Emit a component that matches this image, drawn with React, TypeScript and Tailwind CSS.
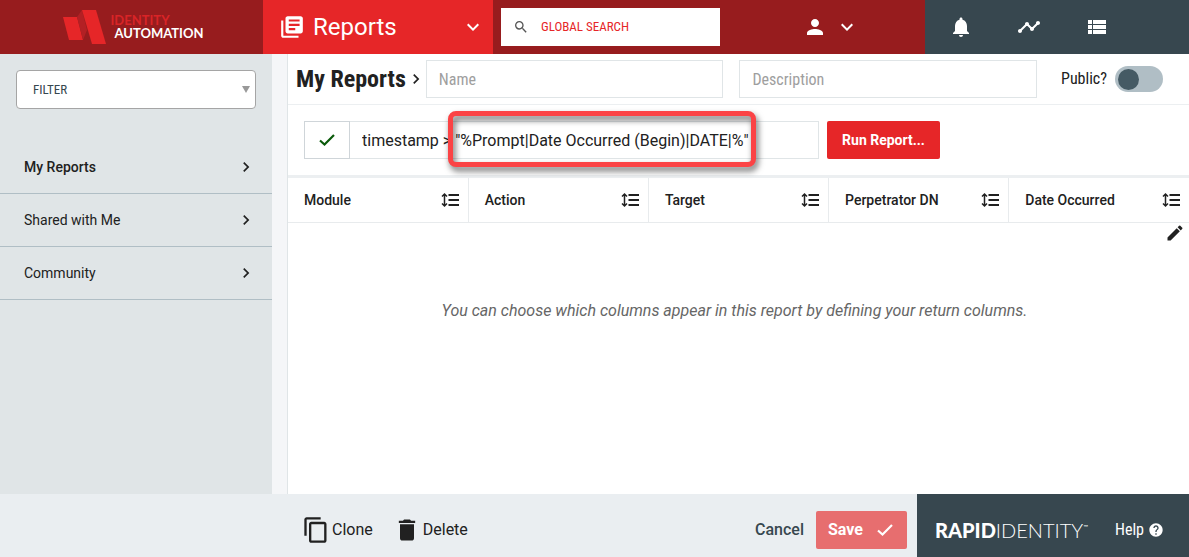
import { useState } from 'react'
import {
  MdContentCopy, MdDelete, MdEdit, MdHelp, MdKeyboardArrowDown, MdKeyboardArrowRight,
  MdLibraryBooks, MdNotifications, MdPerson, MdSearch, MdTimeline, MdViewList,
} from 'react-icons/md'

const sections = ['My Reports', 'Shared with Me', 'Community']
const columns = ['Module', 'Action', 'Target', 'Perpetrator DN', 'Date Occurred']

function Logo() {
  return (
    <a href="#" aria-label="Identity Automation" className="flex items-center gap-1">
      <svg viewBox="0 0 43 34" className="h-[34px] w-[43px]">
        <path d="M0 7h14l6 23H6z" fill="#e62628" />
        <path d="M14 7l5-7 5 20-4 10z" fill="#b32024" />
        <path d="M19 0h14l10 34H29z" fill="#e62628" />
      </svg>
      <span className="flex flex-col font-['Lato'] text-[13px] leading-[13px] font-bold">
        <span className="text-[#d92427]">IDENTITY</span>
        <span className="pl-1 text-white">AUTOMATION</span>
      </span>
    </a>
  )
}

function Check() {
  return (
    <svg viewBox="0 0 20 20" className="size-5" fill="none" stroke="currentColor" strokeWidth="2.2">
      <path d="M3 10.5l4.5 4L17 5" />
    </svg>
  )
}

// up/down arrow next to three lines
function SortIcon() {
  return (
    <svg viewBox="0 0 20 16" className="h-4 w-5 shrink-0" fill="none" stroke="currentColor">
      <path d="M8.5 3H19M8.5 8H19M8.5 13H19" strokeWidth="2" />
      <path d="M4.5 2v12M2 4.5L4.5 2 7 4.5M2 11.5L4.5 14 7 11.5" strokeWidth="1.5" />
    </svg>
  )
}

function Header() {
  return (
    <header className="flex h-[54px] shrink-0 bg-[#971c1e] text-white">
      <div className="flex w-[263px] shrink-0 items-center justify-center pl-1"><Logo /></div>
      <button className="flex w-[230px] shrink-0 items-center bg-[#e62628] pr-2 pl-4">
        <MdLibraryBooks className="mr-2 size-[26px]" />
        <span className="text-2xl">Reports</span>
        <MdKeyboardArrowDown className="ml-auto size-6" />
      </button>
      <div className="flex flex-1 items-center pl-2">
        <label className="flex h-[38px] w-[219px] items-center gap-3 bg-white px-3">
          <MdSearch className="size-4 shrink-0 text-[#555]" />
          <input type="search" aria-label="Global search" placeholder="GLOBAL SEARCH" className="w-full min-w-0 font-['Roboto_Condensed','Roboto',sans-serif] text-[13px] text-gray-800 outline-none placeholder:text-[#e62628]" />
        </label>
        <button aria-label="Account" className="mr-[66px] ml-auto flex items-center gap-2">
          <MdPerson className="size-6" />
          <MdKeyboardArrowDown className="size-6" />
        </button>
      </div>
      <div className="flex w-[264px] shrink-0 items-center gap-11 bg-[#37474f] pl-6">
        <button aria-label="Notifications"><MdNotifications className="size-6" /></button>
        <button aria-label="Activity"><MdTimeline className="size-6" /></button>
        <button aria-label="Lists"><MdViewList className="size-6" /></button>
      </div>
    </header>
  )
}

function Sidebar() {
  return (
    <aside className="w-[272px] shrink-0 bg-[#e0e5e7] pt-4">
      <div className="relative mx-4">
        <select aria-label="Filter" className="h-[39px] w-full appearance-none rounded border border-[#a5a5a5] bg-white px-4 font-['Roboto_Condensed','Roboto',sans-serif] text-[13px] text-[#37474f]">
          <option>FILTER</option>
        </select>
        <svg viewBox="0 0 8 7" className="pointer-events-none absolute top-4 right-1.5 h-[7px] w-2"><path d="M0 0h8L4 7z" fill="#999" /></svg>
      </div>
      <nav className="mt-8">
        {sections.map((s, i) => (
          <a key={s} href="#" className={`flex h-[53px] items-center justify-between border-b border-[#b0bec5] pr-4 pl-6 text-sm ${i === 0 ? 'font-medium' : ''}`}>
            {s}
            <MdKeyboardArrowRight className="size-5" />
          </a>
        ))}
      </nav>
    </aside>
  )
}

export default function App() {
  const [isPublic, setIsPublic] = useState(false)

  return (
    <div className="flex min-h-screen flex-col bg-white font-['Roboto',sans-serif] text-[#212121]">
      <Header />
      <div className="flex flex-1">
        <Sidebar />
        <main className="ml-4 flex min-w-0 flex-1 flex-col shadow-[-1px_0_0_#e0e5e7,-16px_0_0_#f5f6f8]">
          <div className="flex h-[51px] items-center border-b border-[#eceff1] px-2 font-['Roboto_Condensed','Roboto',sans-serif]">
            <h1 className="text-2xl font-bold whitespace-nowrap">My Reports</h1>
            <MdKeyboardArrowRight className="size-5 shrink-0" />
            <div className="flex flex-1 gap-4">
              <input aria-label="Name" placeholder="Name" className="h-[38px] min-w-0 flex-1 border border-[#e0e5e7] px-3 text-base outline-none placeholder:text-[#9e9e9e]" />
              <input aria-label="Description" placeholder="Description" className="h-[38px] min-w-0 flex-1 border border-[#e0e5e7] px-3 text-base outline-none placeholder:text-[#9e9e9e]" />
            </div>
            <label className="mr-[18px] ml-6 flex items-center gap-2 text-base">
              Public?
              <input type="checkbox" checked={isPublic} onChange={e => setIsPublic(e.target.checked)} className="peer sr-only" />
              <span className="flex h-[26px] w-12 items-center rounded-full bg-[#b0bec5] px-[3px] peer-checked:justify-end"><span className="size-[21px] rounded-full bg-[#455a64]" /></span>
            </label>
          </div>

          <div className="flex h-[73px] items-center border-b-[3px] border-[#eceff1] px-4">
            <button aria-label="Validate" className="flex h-[38px] w-[46px] items-center justify-center border border-[#cfd5d9] text-[#0a5a0a]">
              <Check />
            </button>
            <div className="relative w-[469px]">
              <input aria-label="Expression" defaultValue={'timestamp > "%Prompt|Date Occurred (Begin)|DATE|%"'} className="h-[38px] w-full border border-l-0 border-[#e0e5e7] px-3 text-base outline-none" />
              <div className="pointer-events-none absolute -top-2.5 left-[98px] h-14 w-[308px] rounded-lg border-[5px] border-[#fb4345] drop-shadow-[2px_4px_3px_rgba(0,0,0,0.6)]" />
            </div>
            <button className="ml-2 h-[38px] w-[113px] rounded-xs bg-[#e62628] text-sm font-bold whitespace-nowrap text-white">Run Report...</button>
          </div>

          <table className="w-full table-fixed text-sm">
            <thead>
              <tr>
                {columns.map(c => (
                  <th key={c} className="h-11 border-b border-l border-[#e8ebed] pr-2 pl-4 text-left font-medium first:border-l-0">
                    <span className="flex items-center justify-between">{c}<SortIcon /></span>
                  </th>
                ))}
              </tr>
            </thead>
          </table>
          <button aria-label="Edit columns" className="mr-1 self-end"><MdEdit className="size-5" /></button>
          <p className="mt-14 pr-2 text-center text-base text-[#666] italic">You can choose which columns appear in this report by defining your return columns.</p>
        </main>
      </div>

      <footer className="flex h-[63px] shrink-0 bg-[#eaeef1]">
        <div className="ml-[302px] flex flex-1 items-center pt-2 pr-2.5 text-base">
          <button className="flex items-center gap-0.5"><MdContentCopy className="size-7" />Clone</button>
          <button className="ml-5 flex items-center gap-0.5"><MdDelete className="size-7" />Delete</button>
          <button className="ml-auto font-medium text-[#37474f]">Cancel</button>
          <button className="ml-3 flex h-[38px] w-[91px] items-center justify-between rounded-xs bg-[#e76e6f] px-3 font-bold text-white">Save<Check /></button>
        </div>
        <div className="flex w-[272px] shrink-0 items-center bg-[#37474f] pt-2 pr-[25px] pl-[18px] text-white">
          <span className="flex font-['Lato'] text-xl">
            <b className="font-black">RAPID</b><span className="font-light">IDENTITY</span><span className="pt-2 text-[6px] leading-none">™</span>
          </span>
          <a href="#" className="ml-auto flex items-center gap-1 font-['Roboto_Condensed','Roboto',sans-serif] text-base">Help<MdHelp className="size-4" /></a>
        </div>
      </footer>
    </div>
  )
}
